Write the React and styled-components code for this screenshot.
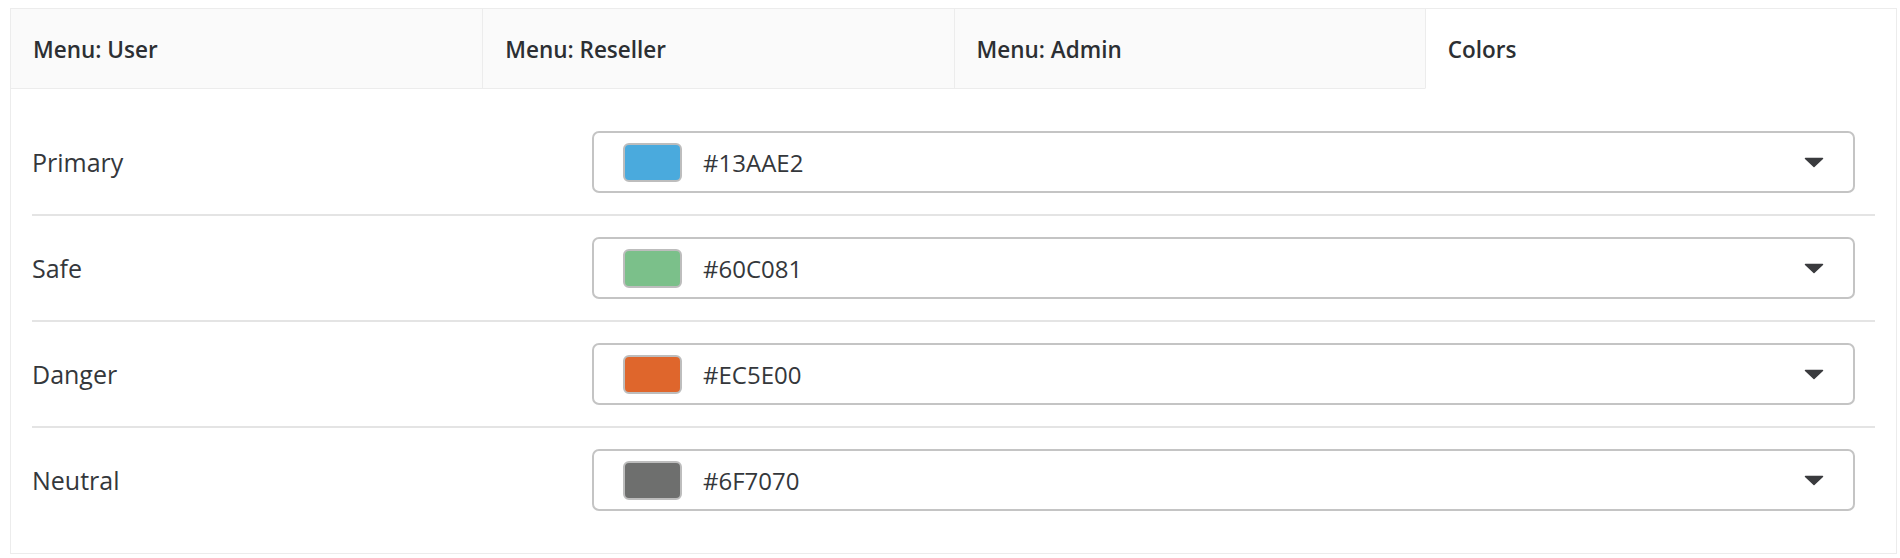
import React from "react";
import styled, { createGlobalStyle } from "styled-components";

const GlobalStyle = createGlobalStyle`
  html, body {
    margin: 0;
    padding: 0;
    background: #ffffff;
  }
  body {
    font-family: "Open Sans", "Noto Sans", "Liberation Sans", sans-serif;
    color: #333333;
  }
  * { box-sizing: border-box; }
`;

const Page = styled.div`
  padding: 8px 3px 5px 10px;
`;

const Panel = styled.div`
  border: 1px solid #ececec;
  background: #ffffff;
`;

const TabBar = styled.div`
  display: grid;
  grid-template-columns: repeat(4, 1fr);
  height: 80px;
`;

const Tab = styled.div`
  display: flex;
  align-items: center;
  padding: 1px 0 0 22px;
  font-size: 22.5px;
  font-weight: 600;
  color: #2c2f33;
  background: ${(p) => (p.$active ? "#ffffff" : "#fafafa")};
  border-bottom: 1px solid ${(p) => (p.$active ? "transparent" : "#ececec")};
  border-left: ${(p) => (p.$first ? "none" : "1px solid #ececec")};
  cursor: pointer;
  white-space: nowrap;
`;

const Body = styled.div`
  padding: 21px;
`;

const Row = styled.div`
  display: grid;
  grid-template-columns: 560px 1fr;
  align-items: center;
  padding: 21px 20px 21px 0;
  border-bottom: ${(p) => (p.$last ? "none" : "2px solid #e4e4e4")};
`;

const Label = styled.div`
  font-size: 25px;
  color: #34373b;
`;

const Select = styled.div`
  display: flex;
  align-items: center;
  height: 62px;
  border: 2px solid #c4c4c4;
  border-radius: 7px;
  padding: 0 29px 0 29px;
  background: #ffffff;
  cursor: pointer;
`;

const Swatch = styled.span`
  display: block;
  width: 59px;
  height: 39px;
  border: 2px solid #bdbdbd;
  border-radius: 6px;
  background: ${(p) => p.$color};
  flex: none;
`;

const Hex = styled.span`
  margin-left: 21px;
  font-size: 24px;
  color: #34373b;
`;

const Caret = styled.svg`
  margin-left: auto;
  width: 20px;
  height: 11px;
  flex: none;
`;

const tabs = ["Menu: User", "Menu: Reseller", "Menu: Admin", "Colors"];

const colors = [
  { label: "Primary", hex: "#13AAE2", shown: "#4aaadd" },
  { label: "Safe", hex: "#60C081", shown: "#7bc08a" },
  { label: "Danger", hex: "#EC5E00", shown: "#df662c" },
  { label: "Neutral", hex: "#6F7070", shown: "#6e6f6e" },
];

export default function App() {
  return (
    <>
      <GlobalStyle />
      <Page>
        <Panel>
          <TabBar>
            {tabs.map((t, i) => (
              <Tab key={t} $first={i === 0} $active={i === tabs.length - 1}>
                {t}
              </Tab>
            ))}
          </TabBar>
          <Body>
            {colors.map((c, i) => (
              <Row key={c.label} $last={i === colors.length - 1}>
                <Label>{c.label}</Label>
                <Select>
                  <Swatch $color={c.shown} />
                  <Hex>{c.hex}</Hex>
                  <Caret viewBox="0 0 20 11">
                    <path
                      d="M1.5 1.5 H18.5 L10 9.5 Z"
                      fill="#3a3b3e"
                      stroke="#3a3b3e"
                      strokeWidth="1.5"
                      strokeLinejoin="round"
                    />
                  </Caret>
                </Select>
              </Row>
            ))}
          </Body>
        </Panel>
      </Page>
    </>
  );
}
